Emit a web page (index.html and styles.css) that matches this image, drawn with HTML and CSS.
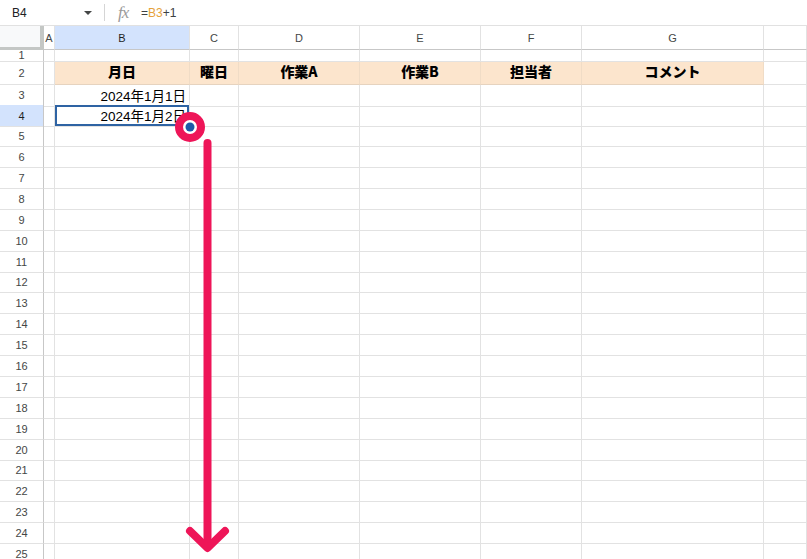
FILE: index.html
```html
<!DOCTYPE html>
<html lang="ja">
<head>
<meta charset="utf-8">
<title>Sheet</title>
<link rel="stylesheet" href="styles.css">
</head>
<body>
<div class="app">
  <div class="formula-bar">
    <div class="namebox"><span class="ref">B4</span><span class="caret"></span></div>
    <div class="sep"></div>
    <div class="fx">fx</div>
    <div class="formula"><span class="op">=</span><span class="cellref">B3</span><span class="op">+1</span></div>
  </div>
  <div class="grid">
    <div class="row head">
      <div class="corner"></div><div class="ch">A</div><div class="ch sel">B</div><div class="ch">C</div><div class="ch">D</div><div class="ch">E</div><div class="ch">F</div><div class="ch">G</div><div class="ch"></div>
    </div>
    <div class="row r1">
      <div class="rh">1</div><div></div><div></div><div></div><div></div><div></div><div></div><div></div><div></div>
    </div>
    <div class="row r2">
      <div class="rh">2</div><div></div><div class="th">月日</div><div class="th">曜日</div><div class="th">作業A</div><div class="th">作業B</div><div class="th">担当者</div><div class="th">コメント</div><div></div>
    </div>
    <div class="row">
      <div class="rh">3</div><div></div><div class="num">2024年1月1日</div><div></div><div></div><div></div><div></div><div></div><div></div>
    </div>
    <div class="row">
      <div class="rh sel">4</div><div></div><div class="num active">2024年1月2日</div><div></div><div></div><div></div><div></div><div></div><div></div>
    </div>
    <div class="row"><div class="rh">5</div><div></div><div></div><div></div><div></div><div></div><div></div><div></div><div></div></div>
    <div class="row"><div class="rh">6</div><div></div><div></div><div></div><div></div><div></div><div></div><div></div><div></div></div>
    <div class="row"><div class="rh">7</div><div></div><div></div><div></div><div></div><div></div><div></div><div></div><div></div></div>
    <div class="row"><div class="rh">8</div><div></div><div></div><div></div><div></div><div></div><div></div><div></div><div></div></div>
    <div class="row"><div class="rh">9</div><div></div><div></div><div></div><div></div><div></div><div></div><div></div><div></div></div>
    <div class="row"><div class="rh">10</div><div></div><div></div><div></div><div></div><div></div><div></div><div></div><div></div></div>
    <div class="row"><div class="rh">11</div><div></div><div></div><div></div><div></div><div></div><div></div><div></div><div></div></div>
    <div class="row"><div class="rh">12</div><div></div><div></div><div></div><div></div><div></div><div></div><div></div><div></div></div>
    <div class="row"><div class="rh">13</div><div></div><div></div><div></div><div></div><div></div><div></div><div></div><div></div></div>
    <div class="row"><div class="rh">14</div><div></div><div></div><div></div><div></div><div></div><div></div><div></div><div></div></div>
    <div class="row"><div class="rh">15</div><div></div><div></div><div></div><div></div><div></div><div></div><div></div><div></div></div>
    <div class="row"><div class="rh">16</div><div></div><div></div><div></div><div></div><div></div><div></div><div></div><div></div></div>
    <div class="row"><div class="rh">17</div><div></div><div></div><div></div><div></div><div></div><div></div><div></div><div></div></div>
    <div class="row"><div class="rh">18</div><div></div><div></div><div></div><div></div><div></div><div></div><div></div><div></div></div>
    <div class="row"><div class="rh">19</div><div></div><div></div><div></div><div></div><div></div><div></div><div></div><div></div></div>
    <div class="row"><div class="rh">20</div><div></div><div></div><div></div><div></div><div></div><div></div><div></div><div></div></div>
    <div class="row"><div class="rh">21</div><div></div><div></div><div></div><div></div><div></div><div></div><div></div><div></div></div>
    <div class="row"><div class="rh">22</div><div></div><div></div><div></div><div></div><div></div><div></div><div></div><div></div></div>
    <div class="row"><div class="rh">23</div><div></div><div></div><div></div><div></div><div></div><div></div><div></div><div></div></div>
    <div class="row"><div class="rh">24</div><div></div><div></div><div></div><div></div><div></div><div></div><div></div><div></div></div>
    <div class="row"><div class="rh">25</div><div></div><div></div><div></div><div></div><div></div><div></div><div></div><div></div></div>
  </div>
  <svg class="overlay" width="807" height="559" viewBox="0 0 807 559" xmlns="http://www.w3.org/2000/svg">
    <circle cx="190" cy="127" r="11" fill="#ffffff" stroke="#ee1558" stroke-width="8"/>
    <circle cx="190" cy="127" r="4.5" fill="#1d5aa8"/>
    <line x1="207.5" y1="143" x2="207.5" y2="546" stroke="#ee1558" stroke-width="8" stroke-linecap="round"/>
    <polyline points="190,531 207.5,548 225,531" fill="none" stroke="#ee1558" stroke-width="8" stroke-linecap="round" stroke-linejoin="round"/>
  </svg>
</div>
</body>
</html>
```

FILE: styles.css
```css
* { box-sizing: border-box; }
html, body {
  margin: 0;
  padding: 0;
  background: #ffffff;
  overflow: hidden;
}
.app {
  position: relative;
  width: 807px;
  height: 559px;
  overflow: hidden;
  font-family: "Liberation Sans", Arial, "Noto Sans CJK JP", sans-serif;
  color: #000;
}
.formula-bar {
  height: 26px;
  border-bottom: 1px solid #e1e1e1;
  display: flex;
  align-items: center;
}
.namebox {
  width: 104px;
  display: flex;
  align-items: center;
  padding-left: 12px;
  padding-right: 12px;
  justify-content: space-between;
  font-size: 12px;
  color: #202124;
}
.caret {
  width: 0;
  height: 0;
  border-left: 4px solid transparent;
  border-right: 4px solid transparent;
  border-top: 4px solid #444746;
}
.sep {
  width: 1px;
  height: 17px;
  background: #d5d5d5;
}
.fx {
  margin-left: 13px;
  width: 23px;
  font-family: "Liberation Serif", "Times New Roman", serif;
  font-style: italic;
  font-size: 17px;
  color: #9a9a9a;
  letter-spacing: -1px;
}
.formula {
  margin-left: 0;
  font-size: 12px;
  color: #3c4043;
}
.cellref { color: #e5a23b; }
.grid {
  display: flex;
  flex-direction: column;
}
.row {
  display: grid;
  grid-template-columns: 44px 11px 135px 49px 121px 121px 101px 182px 1fr;
  height: 20.9px;
}
.row > div {
  border-right: 1px solid #e2e2e2;
  border-bottom: 1px solid #e2e2e2;
}
.row.head { height: 24px; }
.row.r1 { height: 12px; }
.row.r2 { height: 22.5px; }
.row.head > div {
  border-bottom: 1px solid #c7c7c7;
}
.corner {
  background: #f8f9fa;
  border-right: 4px solid #c4c7c5 !important;
  border-bottom: 3px solid #c4c7c5 !important;
}
.ch {
  font-size: 11px;
  color: #444746;
  display: flex;
  align-items: center;
  justify-content: center;
}
.ch.sel, .rh.sel {
  background: #d3e3fd;
  color: #1f1f1f;
}
.rh {
  font-size: 11px;
  color: #444746;
  display: flex;
  align-items: center;
  justify-content: center;
  border-right: 1px solid #c7c7c7 !important;
}
.r1 .rh { align-items: flex-end; line-height: 11px; }
.th {
  background: #fce5cd;
  font-family: "Noto Sans CJK JP", "Liberation Sans", sans-serif;
  font-weight: 900;
  font-size: 14px;
  line-height: 1;
  display: flex;
  align-items: center;
  justify-content: center;
  padding-bottom: 3px;
  border-right-color: #f0dcc6 !important;
  border-bottom-color: #e6d3bf !important;
}
.num {
  font-size: 13.5px;
  display: flex;
  align-items: center;
  justify-content: flex-end;
  padding-right: 3px;
  padding-bottom: 1px;
  font-family: "Liberation Sans", Arial, "Noto Sans CJK JP", sans-serif;
}
.active {
  box-shadow: inset 0 0 0 2px #2e63a3;
}
.overlay {
  position: absolute;
  left: 0;
  top: 0;
  pointer-events: none;
}
```
